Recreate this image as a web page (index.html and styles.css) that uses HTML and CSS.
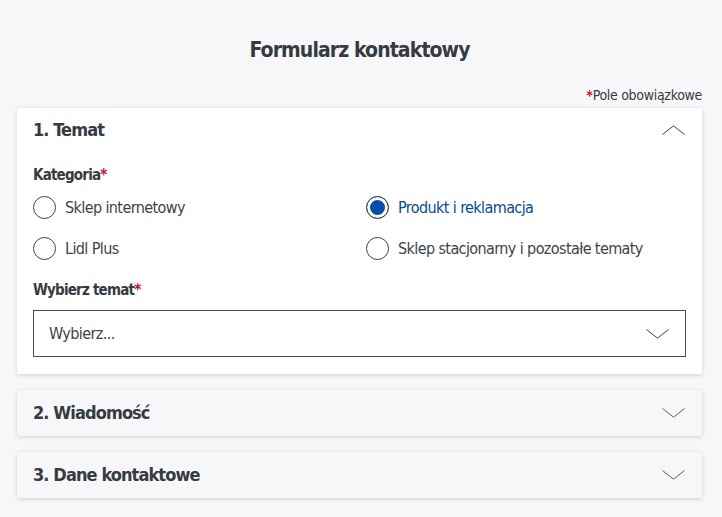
FILE: index.html
```html
<!DOCTYPE html>
<html lang="pl">
<head>
<meta charset="utf-8">
<title>Formularz kontaktowy</title>
<link rel="stylesheet" href="styles.css">
</head>
<body>
<main class="page">
  <h1 class="title">Formularz kontaktowy</h1>
  <p class="required-note"><span class="star">*</span>Pole obowiązkowe</p>

  <section class="card card-open">
    <div class="card-head">
      <h2 class="card-title">1. Temat</h2>
      <svg class="chev" width="23" height="10" viewBox="0 0 23 10"><path d="M0.5 9.5 L11.5 0.8 L22.5 9.5" fill="none" stroke="#3d434a" stroke-width="1"/></svg>
    </div>
    <div class="card-body">
      <div class="label">Kategoria<span class="star">*</span></div>
      <div class="radios">
        <label class="radio"><span class="dot"></span><span>Sklep internetowy</span></label>
        <label class="radio selected"><span class="dot"></span><span>Produkt i reklamacja</span></label>
        <label class="radio"><span class="dot"></span><span>Lidl Plus</span></label>
        <label class="radio"><span class="dot"></span><span>Sklep stacjonarny i pozostałe tematy</span></label>
      </div>
      <div class="label label-topic">Wybierz temat<span class="star">*</span></div>
      <div class="select">
        <span>Wybierz...</span>
        <svg class="chev" width="23" height="10" viewBox="0 0 23 10"><path d="M0.5 0.5 L11.5 9.2 L22.5 0.5" fill="none" stroke="#3d434a" stroke-width="1"/></svg>
      </div>
    </div>
  </section>

  <section class="card card-closed">
    <div class="card-head">
      <h2 class="card-title">2. Wiadomość</h2>
      <svg class="chev" width="23" height="10" viewBox="0 0 23 10"><path d="M0.5 0.5 L11.5 9.2 L22.5 0.5" fill="none" stroke="#5a6068" stroke-width="1"/></svg>
    </div>
  </section>

  <section class="card card-closed">
    <div class="card-head">
      <h2 class="card-title">3. Dane kontaktowe</h2>
      <svg class="chev" width="23" height="10" viewBox="0 0 23 10"><path d="M0.5 0.5 L11.5 9.2 L22.5 0.5" fill="none" stroke="#5a6068" stroke-width="1"/></svg>
    </div>
  </section>
</main>
</body>
</html>
```
FILE: styles.css
```css
html, body {
  margin: 0;
  padding: 0;
  background: #f7f7f9;
}
body {
  font-family: "DejaVu Sans Condensed", "DejaVu Sans", sans-serif;
  font-stretch: condensed;
  color: #353b42;
}
.page {
  padding: 35px 20px 20px 17px;
}
.title {
  margin: 0;
  text-align: center;
  font-size: 21px;
  letter-spacing: -0.9px;
  font-weight: bold;
  line-height: 30px;
  color: #353b42;
}
.required-note {
  margin: 21px 0 0;
  text-align: right;
  font-size: 14px;
  letter-spacing: -0.3px;
  line-height: 18px;
  color: #353b42;
}
.star {
  color: #c8102e;
  font-weight: bold;
}
.card {
  box-shadow: 0 1px 4px rgba(0,0,0,0.16);
  border-radius: 2px;
}
.card-open {
  background: #fff;
  margin-top: 4px;
  padding-bottom: 17px;
}
.card-closed {
  background: #f7f7f9;
  margin-top: 16px;
}
.card-head {
  display: flex;
  align-items: center;
  justify-content: space-between;
  height: 46px;
  padding: 0 17px 0 16px;
}
.card-open .card-head {
  height: 44px;
}
.card-title {
  margin: 0;
  font-size: 18px;
  letter-spacing: -0.9px;
  font-weight: bold;
  line-height: 24px;
}
.card-body {
  padding: 13px 16px 0;
}
.label {
  font-size: 15px;
  letter-spacing: -0.8px;
  font-weight: bold;
  line-height: 20px;
}
.radios {
  display: grid;
  grid-template-columns: 333px 1fr;
  row-gap: 18px;
  margin-top: 11px;
}
.radio {
  display: flex;
  align-items: center;
  gap: 9px;
  font-size: 16px;
  letter-spacing: -0.6px;
  line-height: 20px;
  color: #3d434a;
}
.dot {
  width: 21px;
  height: 21px;
  border: 1px solid #3d434a;
  border-radius: 50%;
  background: #fff;
  box-sizing: content-box;
  flex: none;
}
.radio.selected {
  color: #0a4a8c;
}
.radio.selected .dot {
  background: #0050aa;
  box-shadow: inset 0 0 0 3px #fff;
}
.label-topic {
  margin-top: 20px;
}
.select {
  margin-top: 10px;
  height: 45px;
  border: 1px solid #4a4f55;
  display: flex;
  align-items: center;
  justify-content: space-between;
  padding: 0 16px 0 15px;
  font-size: 16px;
  letter-spacing: -0.6px;
  color: #3d434a;
  background: #fff;
}
```
